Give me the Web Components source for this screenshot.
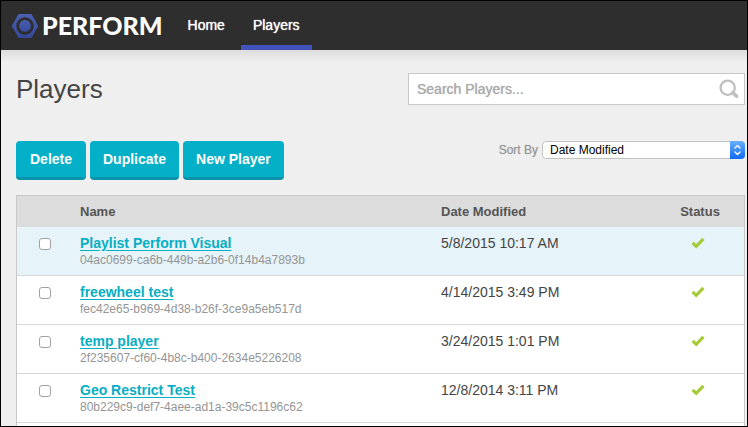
<!DOCTYPE html>
<html lang="en">
<head>
<meta charset="utf-8">
<title>Players</title>
<style>
body { margin: 0; font-family: "Liberation Sans", Arial, sans-serif; color: #444; background: #efefef; }
</style>
</head>
<body>
<app-shell>
  <top-bar slot="header">
    <brand-logo>PERFORM</brand-logo>
    <nav-item>Home</nav-item>
    <nav-item current>Players</nav-item>
  </top-bar>
  <page-heading>Players<search-box slot="aside"></search-box></page-heading>
  <tool-row>
    <action-button>Delete</action-button>
    <action-button>Duplicate</action-button>
    <action-button>New Player</action-button>
    <sort-picker slot="aside"></sort-picker>
  </tool-row>
  <player-table></player-table>
</app-shell>
<script>
function define(name, html, setup) {
  const template = document.createElement('template');
  template.innerHTML = html;
  customElements.define(name, class extends HTMLElement {
    constructor() {
      super();
      this.attachShadow({ mode: 'open' }).append(template.content.cloneNode(true));
      if (setup) setup(this, this.shadowRoot);
    }
  });
}

define('app-shell', `
<style>
:host { display: flex; flex-direction: column; box-sizing: border-box; min-height: 100vh; border: 1px solid #000; }
main { flex: 1; display: flex; flex-direction: column; padding: 0 2px 0 15px;
  background: linear-gradient(#dcdcdc, #efefef 12px); }
</style>
<slot name="header"></slot>
<main><slot></slot></main>`);

define('top-bar', `
<style>
:host { display: block; background: #2e2e2e; }
nav { display: flex; height: 49px; padding-left: 10px; }
</style>
<nav><slot></slot></nav>`);

define('brand-logo', `
<style>
:host { display: flex; align-items: center; gap: 3px; margin-right: 13px; color: #fff; font: 900 25px/49px Lato, sans-serif; }
svg { display: block; }
</style>
<svg width="28" height="26" viewBox="0 0 28 26" aria-hidden="true">
  <defs><linearGradient id="g" x1="0" y1="0" x2="0" y2="1"><stop offset="0" stop-color="#4c60b4"/><stop offset="1" stop-color="#354898"/></linearGradient></defs>
  <path d="M7.6 1H20.4L27.3 13L20.4 25H7.6L.7 13Z" fill="url(#g)"/>
  <circle cx="14" cy="13" r="7.3" fill="url(#g)" stroke="#2e2e2e" stroke-width="2.8"/>
</svg>
<slot></slot>`);

define('nav-item', `
<style>
:host { display: flex; }
a { box-sizing: border-box; padding: 0 12px; color: #fff; font-size: 14px; line-height: 49px; text-decoration: none;
  text-shadow: 0 0 1px #fff; border-bottom: 5px solid transparent; height: 49px; }
:host([current]) a { border-color: #4353bd; }
:host(:first-of-type) a { margin-right: 4px; }
</style>
<a href="#"><slot></slot></a>`);

define('page-heading', `
<style>
:host { display: flex; align-items: flex-start; justify-content: space-between; padding-top: 23px; }
h1 { margin: 0; font-size: 26px; line-height: 32px; font-weight: 400; }
</style>
<h1><slot></slot></h1><slot name="aside"></slot>`);

define('search-box', `
<style>
:host { display: block; flex: 0 1 337px; }
form { display: flex; align-items: center; box-sizing: border-box; height: 32px; padding: 0 5px 0 8px; background: #fff; border: 1px solid #c8c8c8; }
input { flex: 1; min-width: 0; padding: 0; border: 0; outline: 0; background: none; color: #444; font: 14px "Liberation Sans", Arial, sans-serif; }
input::placeholder { color: #a9a9a9; opacity: 1; text-shadow: 0 0 1px #b4b4b4; }
button { display: block; padding: 0; border: 0; background: none; }
svg { display: block; }
</style>
<form role="search">
  <input type="text" placeholder="Search Players..." aria-label="Search players">
  <button type="button" aria-label="Search"><svg width="20" height="20" viewBox="0 0 20 20" fill="none" stroke="#c0c0c0"><circle cx="8.7" cy="8.7" r="7.1" stroke-width="2.3"/><path d="M13.6 13.6L17.6 17.2" stroke-width="3.6" stroke-linecap="round"/></svg></button>
</form>`);

define('tool-row', `
<style>
:host { display: flex; align-items: flex-start; justify-content: space-between; padding: 36px 0 15px; }
div { display: flex; gap: 4px; }
</style>
<div><slot></slot></div><slot name="aside"></slot>`);

define('action-button', `
<style>
:host { display: block; }
button { display: block; box-sizing: border-box; min-width: 70px; height: 39px; padding: 0 13px; border: 0; border-bottom: 3px solid #0b93a9; border-radius: 4px;
  background: #04b0c7; color: #fff; font: 700 14px/36px "Liberation Sans", Arial, sans-serif; }
</style>
<button type="button"><slot></slot></button>`);

define('sort-picker', `
<style>
:host { display: flex; align-items: center; gap: 4px; }
label { font-size: 12px; color: #959595; text-shadow: 0 0 1px #bbb; }
div { display: grid; width: 203px; border-radius: 4px; overflow: hidden; }
select { grid-area: 1 / 1; box-sizing: border-box; width: 100%; height: 18px; padding: 0 24px 0 7px; appearance: none; background: #fff;
  border: 1px solid #c2c2c2; border-radius: 4px; color: #000; font: 12px "Liberation Sans", Arial, sans-serif; }
svg { grid-area: 1 / 1; justify-self: end; z-index: 1; pointer-events: none; background: linear-gradient(#69b0fb, #1069f8); }
</style>
<label for="sort">Sort By</label>
<div>
  <select id="sort"><option>Date Modified</option><option>Name</option><option>Status</option></select>
  <svg width="15" height="18" viewBox="0 0 15 18" fill="none" stroke="#fff" stroke-width="1.4" stroke-linecap="round" stroke-linejoin="round" aria-hidden="true"><path d="M5 7L7.5 4.5L10 7M5 11L7.5 13.5L10 11"/></svg>
</div>`);

define('status-tick', `
<style>
:host { display: block; }
svg { display: block; margin: 0 auto; }
</style>
<svg width="14" height="12" viewBox="0 0 14 12" role="img" aria-label="Active"><path d="M1.6 5.8L5.2 9.3L12.4 1.8" fill="none" stroke="#a6cb38" stroke-width="3.2"/></svg>`);

const players = [
  ['Playlist Perform Visual', '04ac0699-ca6b-449b-a2b6-0f14b4a7893b', '5/8/2015 10:17 AM'],
  ['freewheel test', 'fec42e65-b969-4d38-b26f-3ce9a5eb517d', '4/14/2015 3:49 PM'],
  ['temp player', '2f235607-cf60-4b8c-b400-2634e5226208', '3/24/2015 1:01 PM'],
  ['Geo Restrict Test', '80b229c9-def7-4aee-ad1a-39c5c1196c62', '12/8/2014 3:11 PM']
];

define('player-table', `
<style>
:host { flex: 1; display: block; background: #fff; border: 1px solid #c8c8c8; border-bottom: 0; padding-bottom: 3px; }
table { width: 100%; table-layout: fixed; border-collapse: separate; border-spacing: 0; }
th, td { padding: 0; text-align: left; vertical-align: top; }
th { height: 31px; background: #dcdcdc; color: #555; font-size: 13px; line-height: 31px; }
td { height: 48px; border-bottom: 1px solid #d8d8d8; font-size: 14px; line-height: 18px; }
tr.selected td { background: #e6f3f9; }
.pick { width: 63px; }
.date { width: 215px; }
.status { width: 88px; text-align: center; }
input { appearance: none; display: block; box-sizing: border-box; width: 12px; height: 12px; margin: 11px 0 0 22px; border: 1px solid #a2a2a2; border-radius: 3px; background: #fff; }
input:checked { background: #1069f8; }
td.name, td.date { padding-top: 7px; height: 41px; }
td.status { padding: 10px 4px 0 0; height: 38px; }
a { color: #08aec3; font-weight: 700; text-decoration: underline; text-underline-offset: 2px; }
small { display: block; color: #959595; font-size: 12px; line-height: 16px; }
</style>
<table>
  <thead><tr><th class="pick"></th><th>Name</th><th class="date">Date Modified</th><th class="status">Status</th></tr></thead>
  <tbody></tbody>
</table>`, (host, root) => {
  root.querySelector('tbody').innerHTML = players.map(([name, id, date], i) => `
    <tr${i === 0 ? ' class="selected"' : ''}>
      <td class="pick"><input type="checkbox" aria-label="Select ${name}"></td>
      <td class="name"><a href="#">${name}</a><small>${id}</small></td>
      <td class="date">${date}</td>
      <td class="status"><status-tick></status-tick></td>
    </tr>`).join('');
});
</script>
</body>
</html>
